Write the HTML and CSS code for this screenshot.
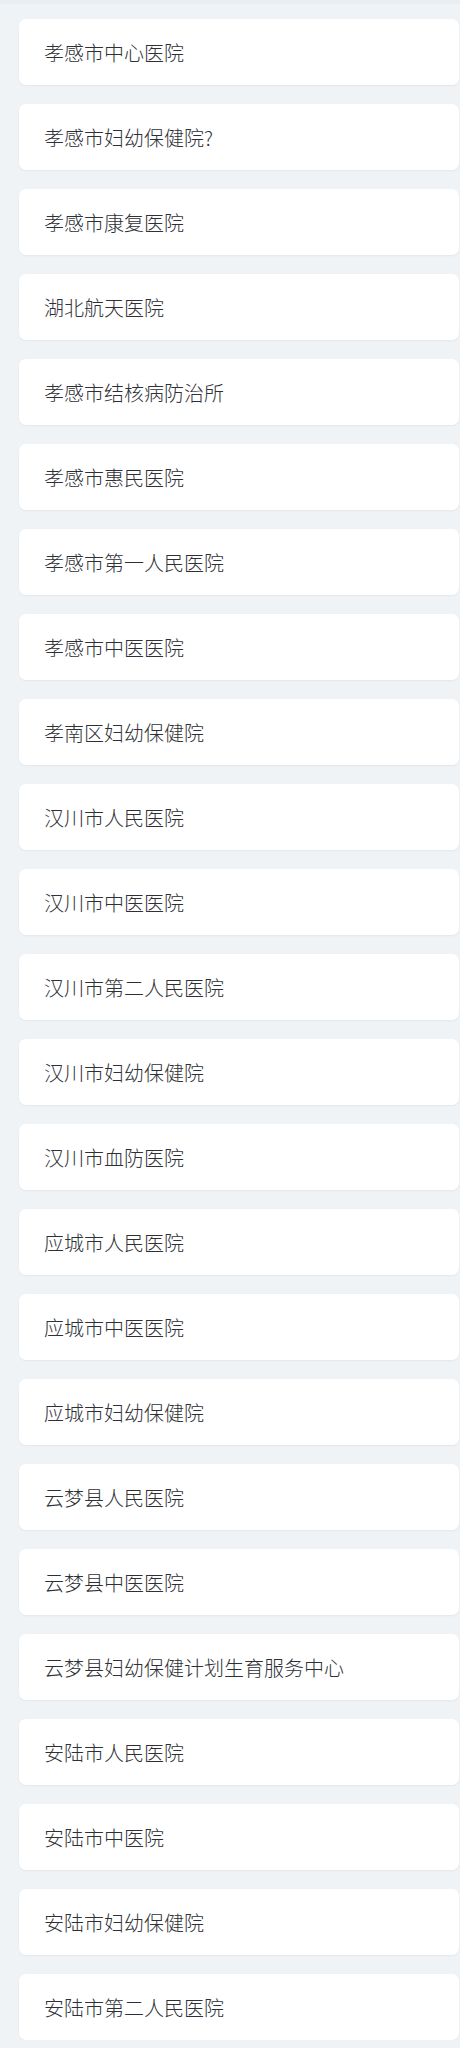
FILE: index.html
```html
<!DOCTYPE html>
<html lang="zh-CN">
<head>
<meta charset="utf-8">
<link rel="stylesheet" href="styles.css">
</head>
<body>
<div class="list">
  <div class="card">孝感市中心医院</div>
  <div class="card">孝感市妇幼保健院?</div>
  <div class="card">孝感市康复医院</div>
  <div class="card">湖北航天医院</div>
  <div class="card">孝感市结核病防治所</div>
  <div class="card">孝感市惠民医院</div>
  <div class="card">孝感市第一人民医院</div>
  <div class="card">孝感市中医医院</div>
  <div class="card">孝南区妇幼保健院</div>
  <div class="card">汉川市人民医院</div>
  <div class="card">汉川市中医医院</div>
  <div class="card">汉川市第二人民医院</div>
  <div class="card">汉川市妇幼保健院</div>
  <div class="card">汉川市血防医院</div>
  <div class="card">应城市人民医院</div>
  <div class="card">应城市中医医院</div>
  <div class="card">应城市妇幼保健院</div>
  <div class="card">云梦县人民医院</div>
  <div class="card">云梦县中医医院</div>
  <div class="card">云梦县妇幼保健计划生育服务中心</div>
  <div class="card">安陆市人民医院</div>
  <div class="card">安陆市中医院</div>
  <div class="card">安陆市妇幼保健院</div>
  <div class="card">安陆市第二人民医院</div>
</div>
</body>
</html>
```
FILE: styles.css
```css
html, body {
  margin: 0;
  padding: 0;
  background: #eff3f6;
}
body {
  font-family: "Noto Sans CJK SC", "Noto Sans", sans-serif;
  color: #2e3035;
}
.list {
  border-top: 4px solid #e9eef2;
  padding: 15px 1px 0 19px;
  display: flex;
  flex-direction: column;
  gap: 19px;
}
.card {
  background: #ffffff;
  border-radius: 7px;
  height: 66px;
  box-sizing: border-box;
  padding: 2px 25px 0;
  display: flex;
  align-items: center;
  font-size: 20px;
  font-weight: 300;
  line-height: 1;
  box-shadow: 0 1px 2px rgba(0, 0, 0, 0.05);
}
```
